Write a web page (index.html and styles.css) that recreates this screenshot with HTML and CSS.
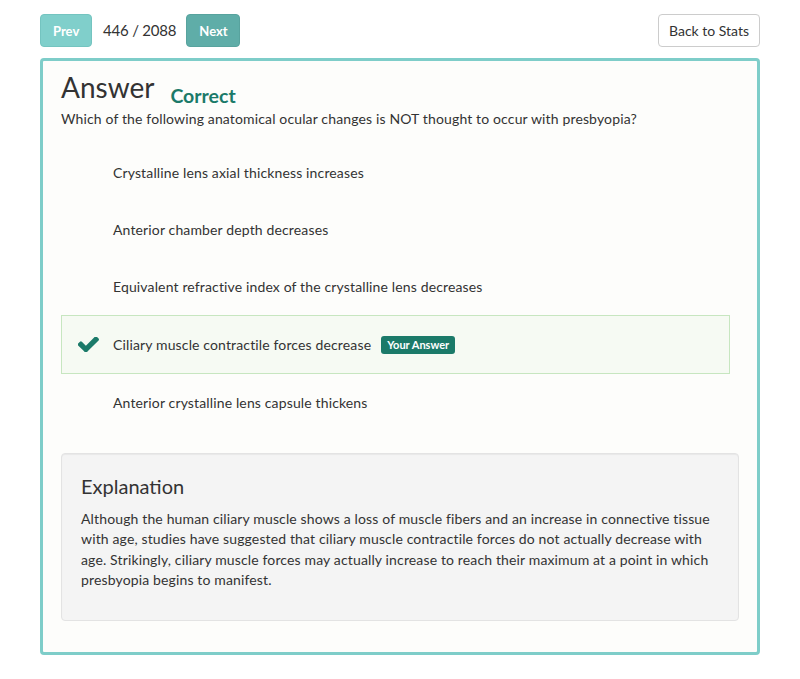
FILE: index.html
```html
<!DOCTYPE html>
<html>
<head>
<meta charset="utf-8">
<link rel="stylesheet" href="styles.css">
</head>
<body>
<div class="container">
  <div class="toolbar">
    <div class="nav">
      <button class="btn btn-prev">Prev</button>
      <span class="counter">446 / 2088</span>
      <button class="btn btn-next">Next</button>
    </div>
    <button class="btn btn-default">Back to Stats</button>
  </div>
  <div class="card">
    <div class="title-row">
      <h1 class="title">Answer</h1>
      <span class="status">Correct</span>
    </div>
    <p class="question">Which of the following anatomical ocular changes is NOT thought to occur with presbyopia?</p>
    <ul class="options">
      <li class="option"><svg class="check faint" viewBox="140 400 1532 1060"><path d="M1671 566q0 40-28 68l-724 724-136 136q-28 28-68 28t-68-28l-136-136-362-362q-28-28-28-68t28-68l136-136q28-28 68-28t68 28l294 295 656-657q28-28 68-28t68 28l136 136q28 28 28 68z"/></svg><span>Crystalline lens axial thickness increases</span></li>
      <li class="option"><svg class="check faint" viewBox="140 400 1532 1060"><path d="M1671 566q0 40-28 68l-724 724-136 136q-28 28-68 28t-68-28l-136-136-362-362q-28-28-28-68t28-68l136-136q28-28 68-28t68 28l294 295 656-657q28-28 68-28t68 28l136 136q28 28 28 68z"/></svg><span>Anterior chamber depth decreases</span></li>
      <li class="option"><svg class="check faint" viewBox="140 400 1532 1060"><path d="M1671 566q0 40-28 68l-724 724-136 136q-28 28-68 28t-68-28l-136-136-362-362q-28-28-28-68t28-68l136-136q28-28 68-28t68 28l294 295 656-657q28-28 68-28t68 28l136 136q28 28 28 68z"/></svg><span>Equivalent refractive index of the crystalline lens decreases</span></li>
      <li class="option selected"><svg class="check" viewBox="140 400 1532 1060"><path d="M1671 566q0 40-28 68l-724 724-136 136q-28 28-68 28t-68-28l-136-136-362-362q-28-28-28-68t28-68l136-136q28-28 68-28t68 28l294 295 656-657q28-28 68-28t68 28l136 136q28 28 28 68z"/></svg><span>Ciliary muscle contractile forces decrease</span><span class="badge">Your Answer</span></li>
      <li class="option"><svg class="check faint" viewBox="140 400 1532 1060"><path d="M1671 566q0 40-28 68l-724 724-136 136q-28 28-68 28t-68-28l-136-136-362-362q-28-28-28-68t28-68l136-136q28-28 68-28t68 28l294 295 656-657q28-28 68-28t68 28l136 136q28 28 28 68z"/></svg><span>Anterior crystalline lens capsule thickens</span></li>
    </ul>
    <div class="well">
      <h3 class="well-title">Explanation</h3>
      <p class="well-text">Although the human ciliary muscle shows a loss of muscle fibers and an increase in connective tissue with age, studies have suggested that ciliary muscle contractile forces do not actually decrease with age. Strikingly, ciliary muscle forces may actually increase to reach their maximum at a point in which presbyopia begins to manifest.</p>
    </div>
  </div>
</div>
</body>
</html>
```

FILE: styles.css
```css
* { box-sizing: border-box; }
html, body { margin: 0; padding: 0; background: #fff; }
body {
  font-family: Lato, "Open Sans", sans-serif;
  font-size: 14px;
  line-height: 20px;
  color: #333;
}
.container {
  width: 720px;
  margin: 0 auto;
  padding-top: 14px;
}
.toolbar {
  display: flex;
  justify-content: space-between;
  align-items: center;
  margin-bottom: 11px;
}
.nav {
  display: flex;
  align-items: center;
}
.btn {
  font-family: inherit;
  font-size: 14px;
  line-height: 20px;
  height: 33px;
  padding: 6px 12px;
  border: 1px solid transparent;
  border-radius: 4px;
  cursor: pointer;
}
.btn-prev, .btn-next {
  font-size: 13px;
  font-weight: 700;
  color: #fff;
}
.btn-prev {
  background: #80cfcb;
  border-color: #74c4c0;
  width: 52px;
}
.btn-next {
  background: #5fada8;
  border-color: #58a39e;
  width: 54px;
}
.counter {
  font-size: 15px;
  margin: 0 10px 0 11px;
  letter-spacing: -0.2px;
  position: relative;
  top: -1px;
}
.btn-default {
  background: #fff;
  border-color: #ccc;
  color: #333;
  width: 102px;
  padding: 6px 0;
}
.card {
  border: 3px solid #7ecdc9;
  border-radius: 4px;
  background: #fdfdfb;
  padding: 10px 18px 31px;
}
.title-row {
  display: flex;
  align-items: baseline;
}
.title {
  font-size: 28px;
  font-weight: 400;
  line-height: 33px;
  margin: 0;
  color: #333;
}
.status {
  font-size: 19.5px;
  font-weight: 700;
  color: #1b7a69;
  margin-left: 16px;
  position: relative;
  top: 5px;
}
.question, .option span, .well-text {
  letter-spacing: 0.14px;
}
.question {
  margin: 5px 0 0;
}
.options {
  list-style: none;
  margin: 15px 0 0;
  padding: 0;
}
.option {
  display: flex;
  align-items: center;
  height: 57px;
  padding-left: 17px;
  margin-right: 9px;
}
.option.selected {
  height: 59px;
  background: #f6faf3;
  border: 1px solid #c7e6c0;
  padding-left: 16px;
}
.check {
  width: 21px;
  height: 15px;
  fill: #1b7a69;
  margin-right: 14px;
  flex: none;
}
.check.faint { fill: #fdfdfb; }
.option span.badge {
  background: #1b7a69;
  color: #fff;
  font-size: 11px;
  font-weight: 700;
  line-height: 12px;
  letter-spacing: 0;
  padding: 3px 6px;
  border-radius: 3px;
  margin-left: 10px;
}
.well {
  margin-top: 22px;
  background: #f4f4f4;
  border: 1px solid #e3e3e3;
  border-radius: 4px;
  box-shadow: inset 0 1px 1px rgba(0,0,0,0.05);
  padding: 20px 19px 29px;
}
.well-title {
  font-size: 20px;
  font-weight: 400;
  line-height: 24px;
  margin: 0 0 11px;
}
.well-text {
  margin: 0;
  line-height: 20.4px;
}
```
